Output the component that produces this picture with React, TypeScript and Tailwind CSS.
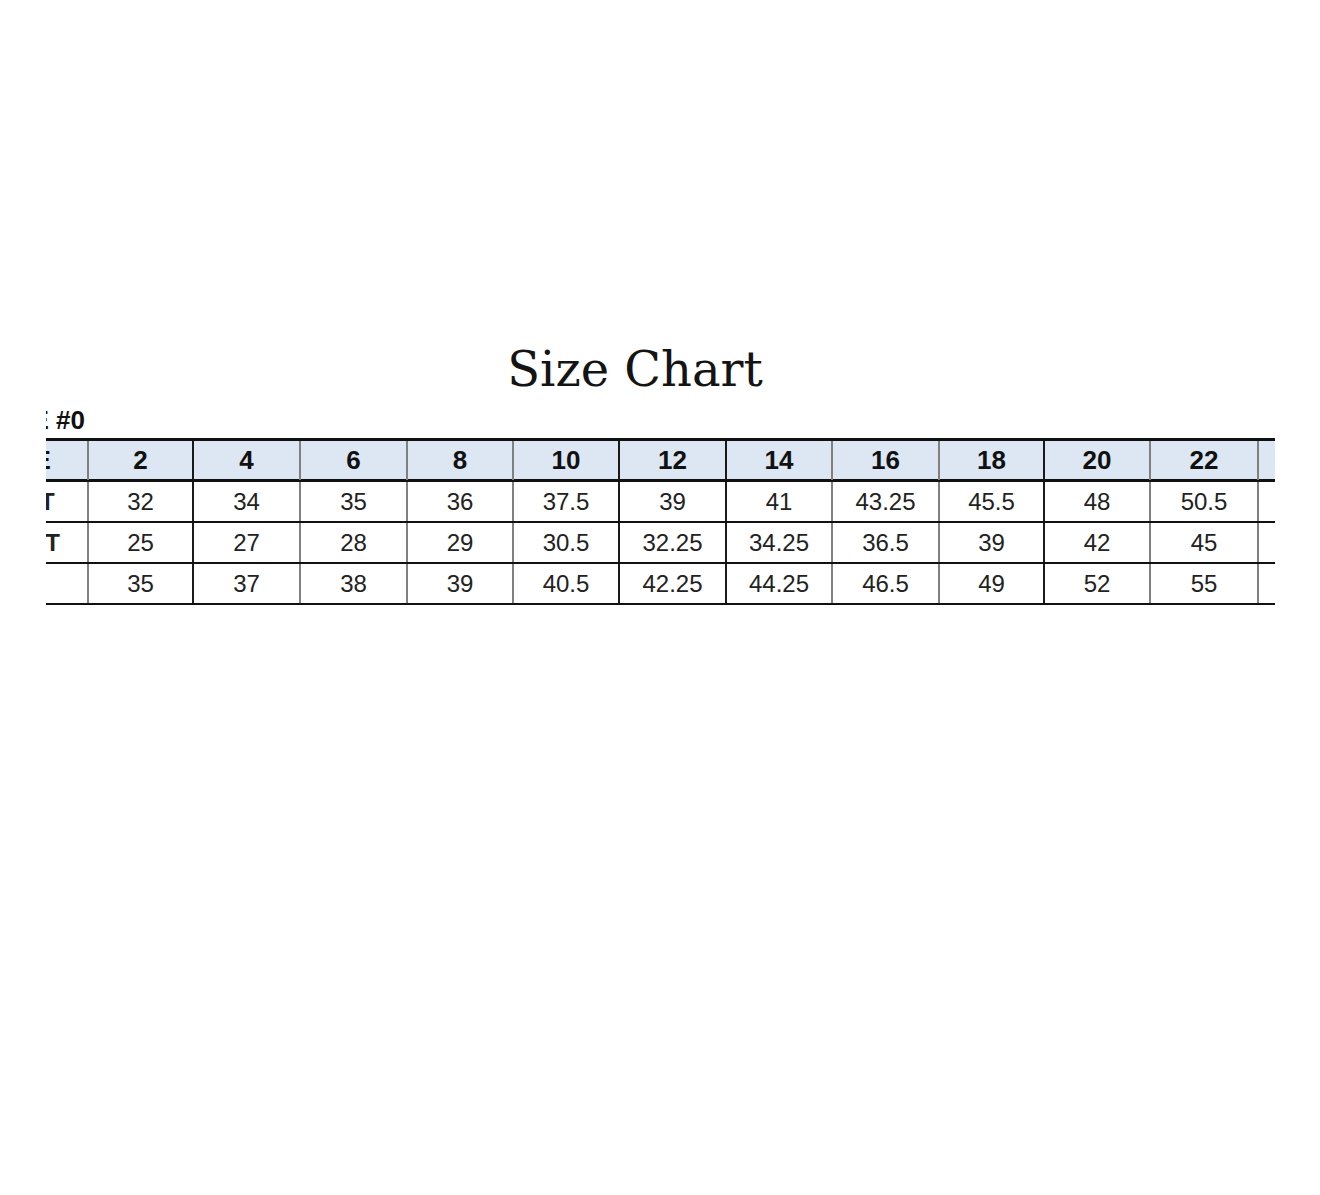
const sizes = ['2', '4', '6', '8', '10', '12', '14', '16', '18', '20', '22', '24'];

const rows = [
  { label: 'BUST', values: ['32', '34', '35', '36', '37.5', '39', '41', '43.25', '45.5', '48', '50.5', '53'] },
  { label: 'WAIST', values: ['25', '27', '28', '29', '30.5', '32.25', '34.25', '36.5', '39', '42', '45', '48'] },
  { label: 'HIP', values: ['35', '37', '38', '39', '40.5', '42.25', '44.25', '46.5', '49', '52', '55', '58'] },
];

// columns whose left rule is drawn dark instead of grey
const darkRules = ['4', '12', '14', '20'];

const gridCols =
  'grid grid-cols-[130px_105px_107px_107px_106px_106px_107px_106px_107px_105px_106px_108px_106px]';

function ruleClass(size: string) {
  return darkRules.includes(size) ? 'border-l-2 border-[#1a1a1a]' : 'border-l-2 border-[#808080]';
}

export default function App() {
  return (
    <div className="min-h-[1195px] bg-white pt-[345px]">
      <div className="flex justify-center pr-[50px]">
        <h1 className="font-['DejaVu_Serif',serif] text-[48px] leading-none font-normal text-[#141414]">
          Size Chart
        </h1>
      </div>

      <div className="mt-[12px] ml-[46px] w-[1229px] overflow-hidden font-['Liberation_Sans',Arial,sans-serif]">
        <div className="-ml-[89px] w-max">
          <div className="w-[128px] text-right text-[26px] font-bold leading-[30px] whitespace-nowrap text-[#111]">
            STYLE #0
          </div>

          <div className={`${gridCols} mt-[3px] h-[44px] border-y-[3px] border-[#111] bg-[#dde7f3]`}>
            <div className="flex items-center justify-center text-[26px] font-bold text-[#111]">SIZE</div>
            {sizes.map((s) => (
              <div
                key={s}
                className={`flex items-center justify-center text-[26px] font-bold text-[#111] ${ruleClass(s)}`}
              >
                {s}
              </div>
            ))}
          </div>

          {rows.map((row) => (
            <div key={row.label} className={`${gridCols} h-[41px] border-b-2 border-[#111]`}>
              <div className="flex items-center justify-center text-[24px] font-bold text-[#222]">{row.label}</div>
              {row.values.map((v, i) => (
                <div
                  key={i}
                  className={`flex items-center justify-center text-[24px] text-[#222] ${ruleClass(sizes[i])}`}
                >
                  {v}
                </div>
              ))}
            </div>
          ))}
        </div>
      </div>
    </div>
  );
}
